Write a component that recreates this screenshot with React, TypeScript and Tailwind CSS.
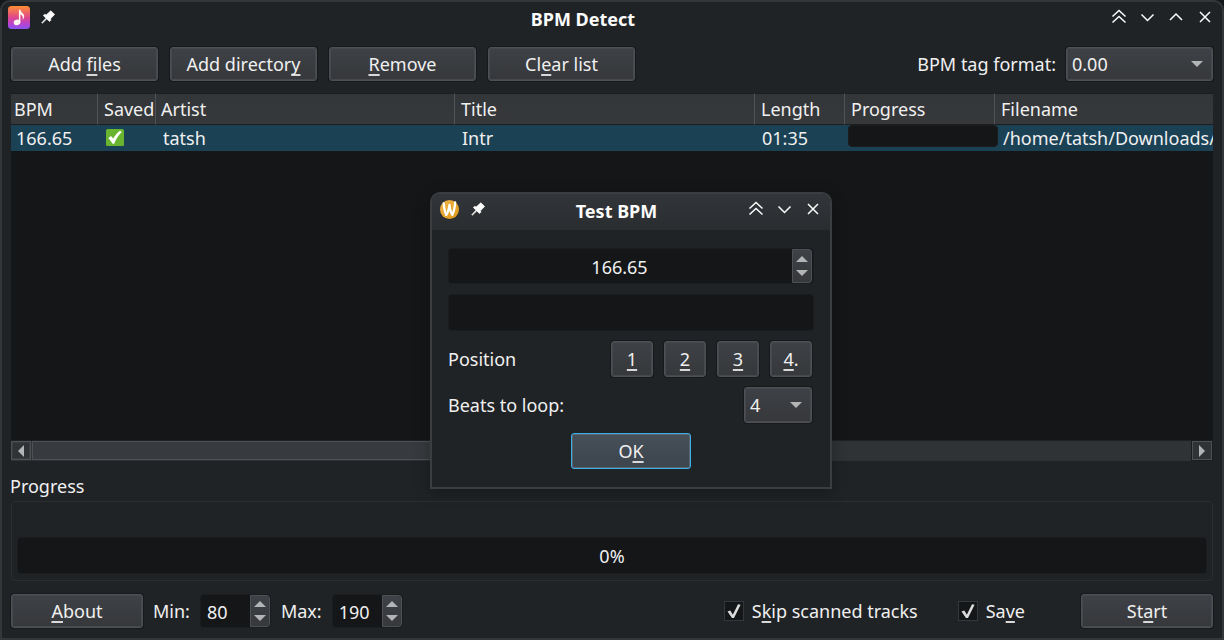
import type { ReactNode } from "react";

const raised =
  "rounded-[3px] border border-[#4d5054] bg-linear-to-b from-[#3e4146] to-[#36383b] shadow-[0_0_0_1px_#17191b,inset_0_0_0_1px_#45484c]";
const sunken = "rounded-[4px] border border-[#1a1c1e] bg-[#141618]";

function Key({ children }: { children: ReactNode }) {
  return (
    <span className="underline decoration-[#d8d8d8] decoration-2 underline-offset-[3px] [text-decoration-skip-ink:none]">
      {children}
    </span>
  );
}

function Button({ className, children }: { className: string; children: ReactNode }) {
  return (
    <button type="button" className={`${raised} flex items-center justify-center pb-px ${className}`}>
      <span className="whitespace-pre">{children}</span>
    </button>
  );
}

function Triangle({ dir }: { dir: "up" | "down" | "left" | "right" }) {
  const shapes = {
    up: "M0 6 6 0l6 6z",
    down: "M0 0h12L6 6z",
    left: "M6 0v12L0 6z",
    right: "M0 0v12l6-6z",
  };
  const flat = dir === "up" || dir === "down";
  return (
    <svg width={flat ? 12 : 6} height={flat ? 6 : 12} className="block" aria-hidden="true">
      <path d={shapes[dir]} fill="#b2b4b6" />
    </svg>
  );
}

function Combo({ id, label, value, className }: { id: string; label?: string; value: string; className: string }) {
  return (
    <div className={`relative ${className}`}>
      <select
        id={id}
        aria-label={label}
        defaultValue={value}
        className={`${raised} block h-full w-full appearance-none pb-px pl-[5px] outline-none`}
      >
        <option>{value}</option>
      </select>
      <span className="pointer-events-none absolute inset-y-0 right-2.5 flex items-center">
        <Triangle dir="down" />
      </span>
    </div>
  );
}

function Spin({
  id,
  label,
  value,
  className,
  inputClass,
}: {
  id: string;
  label?: string;
  value: string;
  className: string;
  inputClass: string;
}) {
  return (
    <div className={`${sunken} flex overflow-hidden ${className}`}>
      <input
        id={id}
        aria-label={label}
        type="number"
        step="any"
        defaultValue={value}
        className={`min-w-0 flex-1 appearance-none bg-transparent pt-px outline-none [-moz-appearance:textfield] [&::-webkit-inner-spin-button]:appearance-none [&::-webkit-outer-spin-button]:appearance-none ${inputClass}`}
      />
      <div className="flex w-5 flex-col items-center justify-center gap-2 rounded-r-[3px] border border-[#4d5054] bg-linear-to-b from-[#3e4146] to-[#36383b]">
        <button type="button" aria-label="Increase">
          <Triangle dir="up" />
        </button>
        <button type="button" aria-label="Decrease">
          <Triangle dir="down" />
        </button>
      </div>
    </div>
  );
}

function Check({ id, children }: { id: string; children: ReactNode }) {
  return (
    <div className="flex items-center gap-2">
      <span className="relative block size-5">
        <input
          id={id}
          type="checkbox"
          defaultChecked
          className="peer block size-5 appearance-none border border-[#33383c] bg-[#141618]"
        />
        <svg
          viewBox="0 0 20 20"
          className="pointer-events-none absolute inset-0 hidden size-5 peer-checked:block"
          aria-hidden="true"
        >
          <path d="M3.500 10.500l2.800-1 2.500 4.200L14 3.200l2.600.6L10 17H8z" fill="#dcdddd" />
        </svg>
      </span>
      <label htmlFor={id} className="whitespace-pre">
        {children}
      </label>
    </div>
  );
}

const glyphs = {
  shade: "M5.500 10.500 12 4.500l6.500 6M5.500 16.500l6.500-6 6.500 6",
  minimize: "M5.500 8.500 11.500 14.500 17.500 8.500",
  maximize: "M5 14 11 8 17 14",
  close: "M6 6 16 16M16 6 6 16",
};

function TitleBar({
  icon,
  title,
  controls,
  className,
}: {
  icon: ReactNode;
  title: string;
  controls: (keyof typeof glyphs)[];
  className: string;
}) {
  return (
    <header className={`flex px-1.5 ${className}`}>
      <div className="flex gap-[7px]">
        {icon}
        <button type="button" aria-label="Pin window" className="size-[22px]">
          <svg viewBox="0 0 22 22" className="size-[22px]">
            <path
              d="M13.800 4.800 17.600 8.400 13.600 12.700 13.800 14.300 12.600 15.500 9.700 12.900 5.300 17.200 4.800 16.700 9 12.200 6.300 9.500 7.500 8.400 9.400 8.800z"
              fill="#fcfcfc"
              stroke="#fcfcfc"
              strokeWidth=".7"
            />
          </svg>
        </button>
      </div>
      <h1 className="flex-1 pt-0.5 text-center leading-[22px] font-bold text-[#fcfcfc]">{title}</h1>
      <div className="flex gap-[7px]">
        {controls.map((name) => (
          <button key={name} type="button" aria-label={name} className="size-[22px]">
            <svg viewBox="0 0 22 22" className="size-[22px]">
              <path d={glyphs[name]} fill="none" stroke="#fcfcfc" strokeWidth="1.500" />
            </svg>
          </button>
        ))}
      </div>
    </header>
  );
}

function MusicIcon() {
  return (
    <svg viewBox="0 0 22 23" className="h-[23px] w-[22px]" aria-hidden="true">
      <defs>
        <linearGradient id="music" x1="0" y1="0" x2="0" y2="1">
          <stop offset="0" stopColor="#ff8f33" />
          <stop offset=".5" stopColor="#e0468c" />
          <stop offset=".8" stopColor="#b444d4" />
          <stop offset="1" stopColor="#8455f0" />
        </linearGradient>
      </defs>
      <rect width="22" height="23" rx="3.500" fill="url(#music)" />
      <ellipse cx="9" cy="16.400" rx="3.300" ry="2.700" transform="rotate(-18 9 16.400)" fill="#fff6f0" />
      <path
        d="M10.900 3.700h1.500c.3 2.600 4 3.500 3.800 6.900-.1 1.500-.9 2.600-1.600 3.200.6-2.600.1-4.400-2.200-5.300v8h-1.500z"
        fill="#fff6f0"
      />
    </svg>
  );
}

function WaylandIcon() {
  return (
    <svg viewBox="0 0 22 22" className="size-[22px]" aria-hidden="true">
      <defs>
        <linearGradient id="wayland" x1="0" y1="0" x2="1" y2="1">
          <stop offset="0" stopColor="#f3b44f" />
          <stop offset="1" stopColor="#dc9914" />
        </linearGradient>
      </defs>
      <circle cx="11.500" cy="11.500" r="9.500" fill="url(#wayland)" />
      <path
        d="M5.700 5.500c.4 4.200 1.300 9 2.600 11.400 1.500-2.200 2.600-5.800 3.200-10 .4 4.200 1.400 7.800 2.800 10 1.500-2.800 2.500-7.200 2.800-12.400"
        fill="none"
        stroke="#fff"
        strokeWidth="2.300"
        strokeLinejoin="round"
        strokeLinecap="round"
      />
    </svg>
  );
}

function SavedMark() {
  return (
    <svg viewBox="0 0 18 18" className="block size-[18px]" role="img" aria-label="Saved">
      <rect width="18" height="17" rx="1.500" fill="#6ab52f" />
      <path
        d="M2.300 9.200 4.900 7 7.200 9.600C9 6.200 11.300 3.700 14 1.700l1.800 1.400C12.600 6.200 10 10 8.200 14.700H6.500C5.300 12.500 4 10.800 2.300 9.200z"
        fill="#fff"
      />
    </svg>
  );
}

const columns = [
  { name: "BPM", width: "w-[87px]", pad: "pl-[3px]" },
  { name: "Saved", width: "w-[58px]", pad: "pl-1.5" },
  { name: "Artist", width: "w-[299px]", pad: "pl-[5px]" },
  { name: "Title", width: "w-[300px]", pad: "pl-1.5" },
  { name: "Length", width: "w-[90px]", pad: "pl-1.5" },
  { name: "Progress", width: "w-[150px]", pad: "pl-1.5" },
  { name: "Filename", width: "", pad: "pl-1.5" },
];

function TrackList() {
  return (
    <section className="mx-[9px] mt-3 flex min-h-[366px] flex-1 flex-col border-b border-[#2f3235] bg-[#141618]">
      <div className="flex-1 overflow-hidden">
        <table className="w-full table-fixed border-separate border-spacing-0">
          <thead>
            <tr className="h-8 bg-linear-to-b from-[#333639] to-[#36383a]">
              {columns.map((c, i) => (
                <th
                  key={c.name}
                  scope="col"
                  className={`border-y border-y-[#1a1c1e] p-0 text-left leading-7 font-normal whitespace-nowrap ${c.width} ${c.pad} ${
                    i < columns.length - 1 ? "border-r border-r-[#505356]" : ""
                  }`}
                >
                  {c.name}
                </th>
              ))}
            </tr>
          </thead>
          <tbody>
            <tr className="h-[26px] bg-[#1b4155] [&>td]:p-0 [&>td]:leading-[26px]">
              <td><div className="pl-[5px]">166.65</div></td>
              <td><div className="pl-2"><SavedMark /></div></td>
              <td><div className="pl-[7px]">tatsh</div></td>
              <td><div className="pl-[7px]">Intr</div></td>
              <td><div className="pl-[7px]">01:35</div></td>
              <td>
                <div
                  role="progressbar"
                  aria-label="Track progress"
                  aria-valuenow={0}
                  className={`${sunken} -mr-[3px] mb-1 ml-[3px] h-[22px]`}
                />
              </td>
              <td><div className="overflow-hidden pl-2 whitespace-nowrap">/home/tatsh/Downloads/</div></td>
            </tr>
          </tbody>
        </table>
      </div>
      <div className="flex h-5 items-stretch border-t border-[#1f2224] bg-[#303336] pr-px">
        <button
          type="button"
          aria-label="Scroll left"
          className="flex w-5 items-center justify-center border border-[#4d5054] bg-[#303336] shadow-[inset_0_0_0_1px_#3a3d40]"
        >
          <Triangle dir="left" />
        </button>
        <div className="ml-px w-3/5 border border-[#4d5054] bg-[#373a3e]" />
        <button
          type="button"
          aria-label="Scroll right"
          className="ml-auto flex w-5 items-center justify-center border border-[#4d5054] bg-[#303336] shadow-[0_0_0_1px_#1a1c1e]"
        >
          <Triangle dir="right" />
        </button>
      </div>
    </section>
  );
}

function TestDialog() {
  return (
    <div
      role="dialog"
      aria-label="Test BPM"
      className="absolute top-[190px] left-[428px] w-[402px] overflow-hidden rounded-t-[10px] border-2 border-[#3b3e41] bg-[#202326] shadow-[0_4px_16px_rgba(0,0,0,0.3)]"
    >
      <TitleBar
        icon={<WaylandIcon />}
        title="Test BPM"
        controls={["shade", "minimize", "close"]}
        className="h-9 bg-linear-to-b from-[#323539] to-[#2a2d30] pt-1"
      />
      <div className="flex flex-col gap-2.5 px-4 py-[18px]">
        <Spin id="test-bpm" label="BPM" value="166.65" className="h-9 pr-px" inputClass="pr-0.5 text-center" />
        <div role="progressbar" aria-label="Playback" aria-valuenow={0} className={`${sunken} h-[37px]`} />
        <div className="flex items-center justify-between pr-0.5">
          <span>Position</span>
          <div className="flex gap-[11px]">
            <Button className="h-9 w-[42px]"><Key>1</Key></Button>
            <Button className="h-9 w-[42px]"><Key>2</Key></Button>
            <Button className="h-9 w-[42px]"><Key>3</Key></Button>
            <Button className="h-9 w-[42px]"><Key>4</Key>.</Button>
          </div>
        </div>
        <div className="flex items-center justify-between pr-0.5">
          <label htmlFor="beats">Beats to loop:</label>
          <Combo id="beats" value="4" className="h-9 w-[68px]" />
        </div>
        <button
          type="button"
          className="h-9 w-[120px] self-center rounded-[3px] border border-[#3daee9] bg-linear-to-b from-[#475058] to-[#3c454e] pb-px shadow-[inset_0_0_0_1px_#5b656d]"
        >
          O<Key>K</Key>
        </button>
      </div>
    </div>
  );
}

export default function App() {
  return (
    <div className="bg-[#141618] font-['Noto_Sans',sans-serif] text-[18px] leading-6 text-[#f0f0f0]">
      <main className="relative flex min-h-screen flex-col rounded-t-[10px] border-2 border-[#34373a] bg-[#202326]">
        <TitleBar
          icon={<MusicIcon />}
          title="BPM Detect"
          controls={["shade", "minimize", "maximize", "close"]}
          className="h-9 pt-1"
        />
        <div className="mx-[9px] mt-[9px] flex items-center gap-3">
          <Button className="h-[34px] w-[147px]">Add <Key>f</Key>iles</Button>
          <Button className="h-[34px] w-[147px]">Add director<Key>y</Key></Button>
          <Button className="h-[34px] w-[147px]"><Key>R</Key>emove</Button>
          <Button className="h-[34px] w-[147px]">Cl<Key>e</Key>ar list</Button>
          <div className="ml-auto flex items-center gap-2.5">
            <label htmlFor="format">BPM tag format:</label>
            <Combo id="format" value="0.00" className="h-[34px] w-[147px]" />
          </div>
        </div>
        <TrackList />
        <h2 className="mx-2 mt-3 leading-[26px]">Progress</h2>
        <div className="mx-[9px] mt-0.5 rounded-[4px] border border-[#2b2e31] px-[5px] pt-[35px] pb-1.5">
          <div
            role="progressbar"
            aria-label="Total progress"
            aria-valuenow={0}
            className={`${sunken} flex h-[37px] items-center justify-center`}
          >
            0%
          </div>
        </div>
        <footer className="mx-[9px] mt-[13px] mb-2.5 flex items-center">
          <Button className="h-[34px] w-[132px]"><Key>A</Key>bout</Button>
          <label htmlFor="min" className="mx-2.5">Min:</label>
          <Spin id="min" value="80" className="h-[34px] w-[71px]" inputClass="pl-1.5" />
          <label htmlFor="max" className="mx-2.5">Max:</label>
          <Spin id="max" value="190" className="h-[34px] w-[71px]" inputClass="pl-1.5" />
          <div className="ml-auto flex items-center gap-10">
            <Check id="skip">S<Key>k</Key>ip scanned tracks</Check>
            <Check id="save">Sa<Key>v</Key>e</Check>
          </div>
          <Button className="ml-14 h-[34px] w-[132px]">St<Key>a</Key>rt</Button>
        </footer>
        <TestDialog />
      </main>
    </div>
  );
}
